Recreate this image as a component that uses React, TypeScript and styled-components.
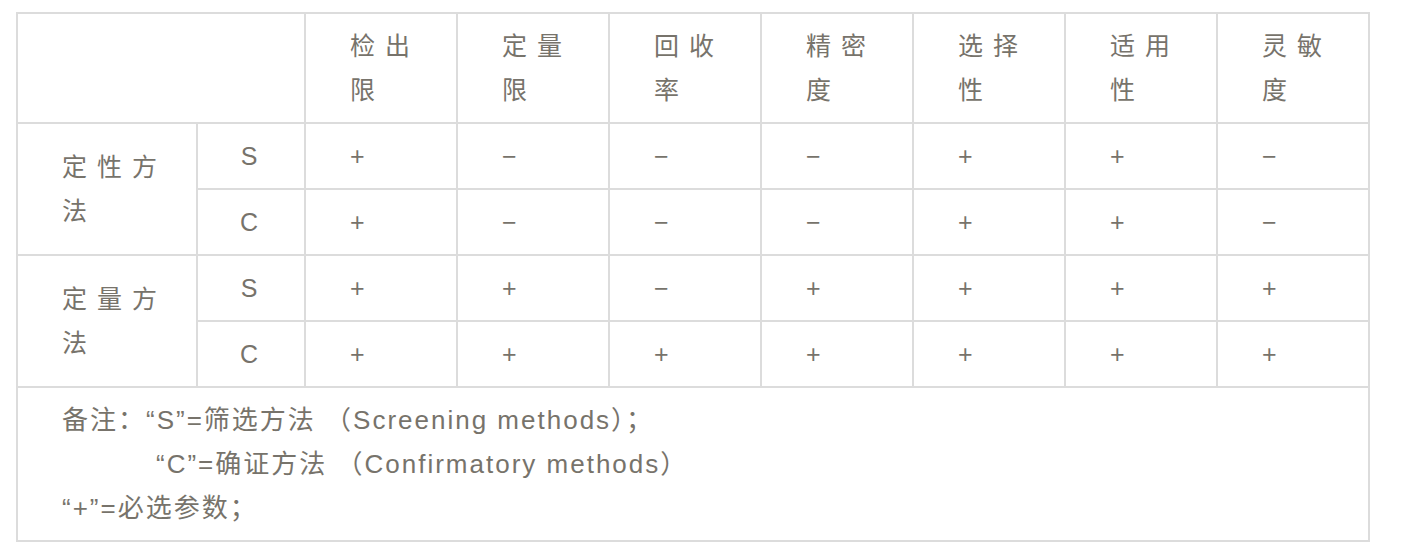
import React from 'react'
import styled, { createGlobalStyle } from 'styled-components'

const GlobalStyle = createGlobalStyle`
  html, body {
    margin: 0;
    padding: 0;
    background: #ffffff;
  }
`

const Page = styled.div`
  padding: 12px 0 0 16px;
  font-family: 'Liberation Sans', 'Noto Sans CJK SC', sans-serif;
  color: #77736b;
`

const Table = styled.table`
  width: 1354px;
  table-layout: fixed;
  border-collapse: collapse;
  font-size: 25px;
  line-height: 44px;
`

const Cell = styled.td<{ $center?: boolean; $spaced?: boolean }>`
  border: 2px solid #dcdcdc;
  padding: 10px 20px 10px 44px;
  text-align: ${({ $center }) => ($center ? 'center' : 'left')};
  letter-spacing: ${({ $spaced }) => ($spaced ? '10px' : '0')};
  vertical-align: middle;
  font-weight: normal;
`

const TypeCell = styled(Cell)`
  padding: 10px 4px 10px 0;
`

const NoteCell = styled.td`
  border: 2px solid #dcdcdc;
  padding: 10px 44px;
  font-size: 26px;
  letter-spacing: 2px;
`

const NoteLine = styled.div<{ $indent?: number }>`
  padding-left: ${({ $indent }) => $indent ?? 0}px;
  white-space: nowrap;
`

const params = ['检出限', '定量限', '回收率', '精密度', '选择性', '适用性', '灵敏度']

const groups = [
  {
    name: '定性方法',
    rows: [
      { type: 'S', values: ['+', '−', '−', '−', '+', '+', '−'] },
      { type: 'C', values: ['+', '−', '−', '−', '+', '+', '−'] },
    ],
  },
  {
    name: '定量方法',
    rows: [
      { type: 'S', values: ['+', '+', '−', '+', '+', '+', '+'] },
      { type: 'C', values: ['+', '+', '+', '+', '+', '+', '+'] },
    ],
  },
]

export default function App() {
  return (
    <Page>
      <GlobalStyle />
      <Table>
        <colgroup>
          <col style={{ width: 180 }} />
          <col style={{ width: 108 }} />
          {params.map((p) => (
            <col key={p} style={{ width: 152 }} />
          ))}
        </colgroup>
        <tbody>
          <tr>
            <Cell colSpan={2} />
            {params.map((p) => (
              <Cell key={p} as="th" $spaced>
                {p}
              </Cell>
            ))}
          </tr>
          {groups.map((g) =>
            g.rows.map((row, i) => (
              <tr key={g.name + row.type}>
                {i === 0 && (
                  <Cell rowSpan={g.rows.length} $spaced>
                    {g.name}
                  </Cell>
                )}
                <TypeCell $center>{row.type}</TypeCell>
                {row.values.map((v, j) => (
                  <Cell key={j}>{v}</Cell>
                ))}
              </tr>
            )),
          )}
          <tr>
            <NoteCell colSpan={9}>
              <NoteLine>备注：“S”=筛选方法 （Screening methods）；</NoteLine>
              <NoteLine $indent={94}>“C”=确证方法 （Confirmatory methods）</NoteLine>
              <NoteLine>“+”=必选参数；</NoteLine>
            </NoteCell>
          </tr>
        </tbody>
      </Table>
    </Page>
  )
}
